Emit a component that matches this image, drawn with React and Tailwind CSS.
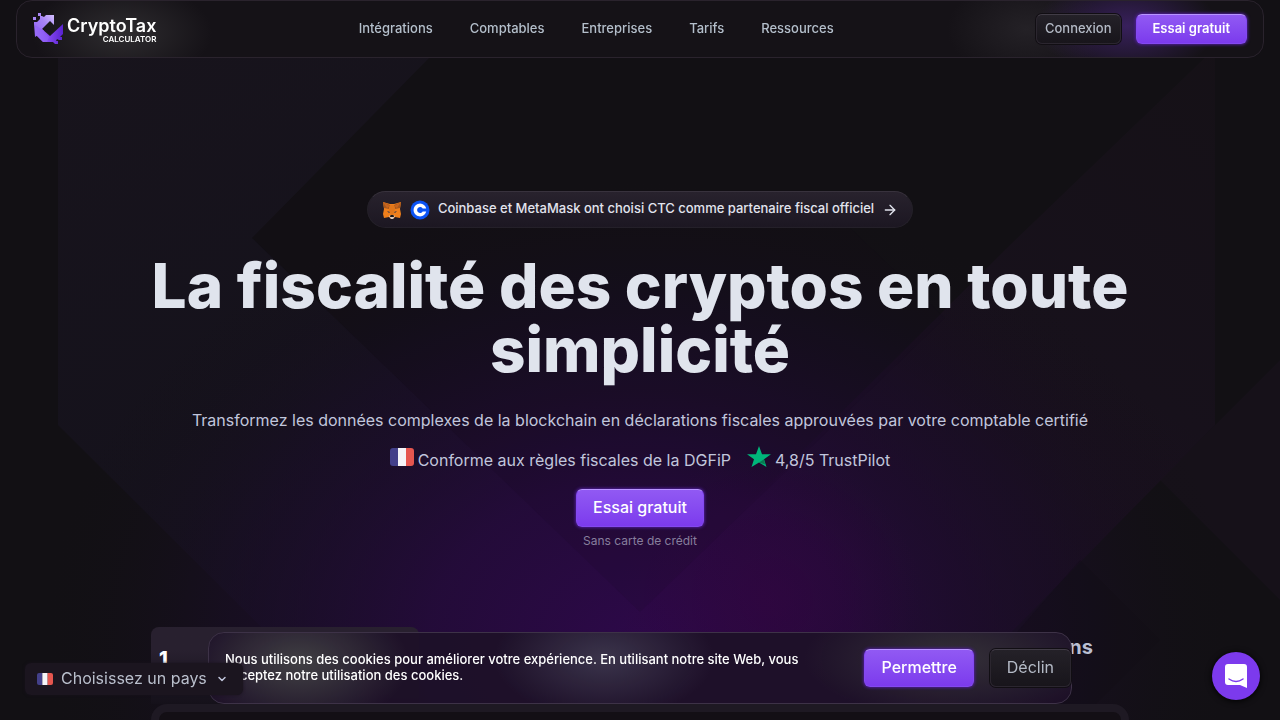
import { ArrowRight, ChevronDown } from "lucide-react";

const navItems = ["Intégrations", "Comptables", "Entreprises", "Tarifs", "Ressources"];

const primary =
  "border border-[#8348f0] border-t-[#b794ff] bg-linear-to-b from-[#9159f3] to-[#7c3aed] text-white shadow-[0_0_3px_1px_#4c1d95]";
const secondary =
  "border border-[#2b262f] border-t-[#413c46] bg-linear-to-b from-[#242128] to-[#18151b] text-[#b4bac6] shadow-[0_0_0_1px_#110e13]";

function Backdrop() {
  return (
    <svg
      aria-hidden="true"
      className="pointer-events-none absolute inset-0 h-full w-full"
      viewBox="0 0 1280 720"
      preserveAspectRatio="xMidYMid slice"
    >
      <defs>
        <radialGradient id="violet" gradientUnits="userSpaceOnUse" cx="0" cy="0" r="1" gradientTransform="translate(640 640) scale(600 460)">
          <stop offset="0" stopColor="#2e084b" stopOpacity="0.95" />
          <stop offset="0.35" stopColor="#260a3e" stopOpacity="0.85" />
          <stop offset="0.7" stopColor="#1b0d2a" stopOpacity="0.5" />
          <stop offset="1" stopColor="#131014" stopOpacity="0" />
        </radialGradient>
        <radialGradient id="magenta" gradientUnits="userSpaceOnUse" cx="770" cy="600" r="150">
          <stop offset="0" stopColor="#3c0042" stopOpacity="0.35" />
          <stop offset="1" stopColor="#3c0042" stopOpacity="0" />
        </radialGradient>
        <linearGradient id="facetL" x1="0" y1="0" x2="0.4" y2="1">
          <stop offset="0" stopColor="#18141c" />
          <stop offset="1" stopColor="#151220" stopOpacity="0.6" />
        </linearGradient>
        <linearGradient id="facetR" gradientUnits="userSpaceOnUse" x1="1215" y1="0" x2="800" y2="600">
          <stop offset="0" stopColor="#151116" />
          <stop offset="0.5" stopColor="#17111b" />
          <stop offset="1" stopColor="#220b2b" stopOpacity="0.3" />
        </linearGradient>
      </defs>
      <rect width="1280" height="720" fill="#121014" />
      <path d="M58 0H486L252 238 640 612 530 720H355L58 425Z" fill="url(#facetL)" />
      <path d="M1215 0V425L925 720H750L640 612 1010 245 1215 48Z" fill="url(#facetR)" />
      <path d="M1160 480 1280 600V360Z" fill="#19121d" opacity="0.5" />
      <rect width="1280" height="720" fill="url(#violet)" />
      <rect width="1280" height="720" fill="url(#magenta)" />
      <path d="M252 238 640 612 945 318 810 190H300Z" fill="#130a1e" opacity="0.1" />
      <path d="M1080 560 1160 640 1080 720H940Z" fill="#100d12" opacity="0.25" />
    </svg>
  );
}

function Logo() {
  return (
    <a href="#accueil" aria-label="CryptoTax Calculator" className="flex items-center gap-0.5">
      <svg className="h-8 w-8" viewBox="0 0 32 32" aria-hidden="true">
        <defs>
          <linearGradient id="markTop" x1="0" y1="1" x2="1" y2="0">
            <stop offset="0" stopColor="#8f5df5" />
            <stop offset="0.6" stopColor="#a783f7" />
            <stop offset="1" stopColor="#d3c0fb" />
          </linearGradient>
          <linearGradient id="markEnd" x1="0" y1="0" x2="1" y2="0">
            <stop offset="0" stopColor="#a67bf8" />
            <stop offset="0.5" stopColor="#8247ee" />
            <stop offset="1" stopColor="#5a22cf" />
          </linearGradient>
        </defs>
        <path d="M1 11V9H4L7 6V3H9L11 4 13 2H21V12L17 8 9 16 11 18 2 24Z" fill="url(#markTop)" />
        <path d="M2 14 9 16 17 23 30 11V21L27 24H29V27H26L24 26 23 28H25V31H22L20 29H10L2 21Z" fill="url(#markEnd)" />
        <path d="M2 12 8 16 16 24 14 29H10L2 21Z" fill="#8f62f6" opacity="0.6" />
        <path d="M5 0H8V3H5ZM0 4H3V7H0Z" fill="#a987f5" />
      </svg>
      <span className="flex flex-col items-end text-white">
        <span className="text-lg leading-5 font-semibold">CryptoTax</span>
        <span className="text-[8px] leading-[6px] font-semibold">CALCULATOR</span>
      </span>
    </a>
  );
}

function Flag({ className }) {
  return (
    <svg className={className} viewBox="0 0 24 18" preserveAspectRatio="none" aria-hidden="true">
      <path d="M3 0H8V18H3Q0 18 0 15V3Q0 0 3 0Z" fill="#43408a" />
      <path d="M8 0H16V18H8Z" fill="#f5f5f8" />
      <path d="M16 0H21Q24 0 24 3V15Q24 18 21 18H16Z" fill="#e5564f" />
    </svg>
  );
}

function Fox() {
  return (
    <svg className="h-5 w-5" viewBox="0 0 20 20" aria-hidden="true">
      <path d="M1 2 8 4H12L19 2 18 9 19 14 18 18 13 17 11 19H9L7 17 2 18 1 14 2 9Z" fill="#ef7f1b" />
      <path d="M1 2 8 5 7 9 2 8ZM19 2 12 5 13 9 18 8Z" fill="#a5581f" />
      <path d="M1 2 8 6 5 8ZM19 2 12 6 15 8Z" fill="#c9641c" />
      <path d="M7 9 8 5H12L13 9 11 15H9Z" fill="#e0761b" />
      <path d="M5 11 8 12 7 13ZM15 11 12 12 13 13Z" fill="#2b3350" />
      <path d="M7 16 9 15H11L13 16 11 19H9Z" fill="#d9c9bd" />
      <path d="M8.500 15H11.500L12 17H8Z" fill="#1c1614" />
    </svg>
  );
}

export default function App() {
  return (
    <div className="relative h-screen overflow-hidden bg-[#121014] font-['Inter','Liberation_Sans',sans-serif] text-[#c1c6dc]">
      <Backdrop />

      <header className="fixed inset-x-4 top-0 z-20 flex h-[58px] items-center justify-between overflow-hidden rounded-2xl border border-[#2a232d] bg-[#151217] bg-[radial-gradient(ellipse_90px_50px_at_105px_32px,#2e2c2f,transparent),radial-gradient(ellipse_90px_50px_at_1110px_25px,#38205c,transparent),radial-gradient(ellipse_80px_50px_at_1010px_28px,#242126,transparent)] px-4">
        <Logo />
        <nav className="flex gap-[37px] pb-0.5 text-[13px] leading-5 font-medium text-[#b4bfcb]">
          {navItems.map((item) => (
            <a key={item} href={"#" + item.toLowerCase()}>{item}</a>
          ))}
        </nav>
        <div className="flex gap-[15px] text-[13px] leading-5 font-medium">
          <button className={"h-[30px] rounded-md px-2 pb-0.5 " + secondary}>Connexion</button>
          <button className={"h-[30px] rounded-md px-4 pb-0.5 font-semibold " + primary}>Essai gratuit</button>
        </div>
      </header>

      <main className="relative mx-auto flex max-w-[978px] flex-col items-center pt-[191px]">
        <a
          href="#partenaires"
          className="flex h-[37px] items-center gap-2 rounded-full border border-[#242029] border-t-[#38323d] bg-linear-to-b from-[#28222d] to-[#1c1722] px-3.5 text-[13px] font-medium text-[#e2e4ee]"
        >
          <Fox />
          <svg className="h-5 w-5" viewBox="0 0 20 20" aria-hidden="true">
            <circle cx="10" cy="10" r="9.500" fill="#0b53f4" />
            <path d="M16.200 8.500A6.400 6.400 0 1 0 16.200 11.500H12.700A3 3 0 1 1 12.700 8.500Z" fill="#fff" />
          </svg>
          <span className="pb-0.5">Coinbase et MetaMask ont choisi CTC comme partenaire fiscal officiel</span>
          <ArrowRight className="h-4 w-4" />
        </a>
        <h1 className="mt-[26px] self-stretch text-center text-[62px] leading-16 font-extrabold text-[#e0e4ed]">
          La fiscalité des cryptos en toute simplicité
        </h1>
        <p className="mt-[26px] text-center text-base leading-6">
          Transformez les données complexes de la blockchain en déclarations fiscales approuvées par votre comptable certifié
        </p>
        <div className="mt-4 flex gap-4 text-base leading-6">
          <span className="flex gap-1">
            <Flag className="h-[18px] w-6" />
            Conforme aux règles fiscales de la DGFiP
          </span>
          <span className="flex gap-1">
            <svg className="-mt-0.5 h-[22px] w-6" viewBox="0 0 24 24" preserveAspectRatio="none" aria-hidden="true">
              <path d="M12 0 15 9H24L17 14.500 19.500 23 12 18 4.500 23 7 14.500 0 9H9Z" fill="#00b67a" />
              <path d="M17 14.500 12 18 18 20Z" fill="#087a50" />
            </svg>
            4,8/5 TrustPilot
          </span>
        </div>
        <button className={"mt-[17px] h-[38px] rounded-md px-4 pb-0.5 text-base font-medium " + primary}>Essai gratuit</button>
        <p className="mt-1 text-xs leading-5 text-[#877f9d]">Sans carte de crédit</p>

        <section className="mt-[76px] flex h-[77px] justify-between self-stretch text-xl font-bold">
          <div className="flex w-[268px] items-start rounded-t-lg bg-linear-to-b from-[#28202f] from-30% to-[#15111a] px-2 pt-[18px] leading-7 font-extrabold text-white">1</div>
          <div className="px-9 pt-2 leading-6 text-[#b9bfd2]">ns</div>
        </section>
        <section className="h-24 self-stretch rounded-2xl border-8 border-[#1e1923] bg-[#130f15]" />
      </main>

      <aside className="fixed inset-x-[208px] bottom-4 z-20 flex h-[72px] items-center gap-4 rounded-2xl border border-[#3d3247] bg-[#1d1128]/95 bg-[radial-gradient(ellipse_110px_65px_at_90px_30px,#414044,transparent),radial-gradient(ellipse_110px_60px_at_395px_25px,#3b344b,transparent),radial-gradient(ellipse_150px_60px_at_745px_25px,#343038,transparent)] pl-4">
        <p className="w-[622px] pr-7 pb-0.5 text-[13px] leading-4 font-medium text-white">
          Nous utilisons des cookies pour améliorer votre expérience. En utilisant notre site Web, vous acceptez notre utilisation des cookies.
        </p>
        <div className="ml-auto flex gap-4 text-base font-medium">
          <button className={"h-[38px] rounded-md px-4 pb-0.5 " + primary}>Permettre</button>
          <button className={"h-[38px] rounded-md px-4 pb-0.5 font-normal " + secondary}>Déclin</button>
        </div>
      </aside>

      <div className="fixed bottom-[25px] left-[25px] z-30 flex h-8 w-[218px] items-center rounded-md bg-[#1b151f] shadow-[0_0_3px_#18111d]">
        <Flag className="pointer-events-none absolute left-3 h-3 w-4" />
        <select
          aria-label="Choisissez un pays"
          className="h-full w-full appearance-none bg-transparent pb-0.5 pl-9 text-base text-[#b9bfcc]"
        >
          <option>Choisissez un pays</option>
        </select>
        <ChevronDown className="pointer-events-none absolute right-[15px] h-3 w-3" strokeWidth={3} />
      </div>

      <button
        aria-label="Ouvrir la messagerie"
        className="fixed right-5 bottom-5 z-30 flex h-12 w-12 items-center justify-center rounded-full bg-[#7c3aed] shadow-[0_1px_6px_#000]"
      >
        <svg className="h-6 w-[22px]" viewBox="0 0 22 24" aria-hidden="true">
          <path d="M3 0H19Q22 0 22 3V24L15 21H3Q0 21 0 18V3Q0 0 3 0Z" fill="#fff" />
          <path d="M4 15Q11 20 18 15" fill="none" stroke="#7c3aed" strokeWidth="1.500" strokeLinecap="round" />
        </svg>
      </button>
    </div>
  );
}
